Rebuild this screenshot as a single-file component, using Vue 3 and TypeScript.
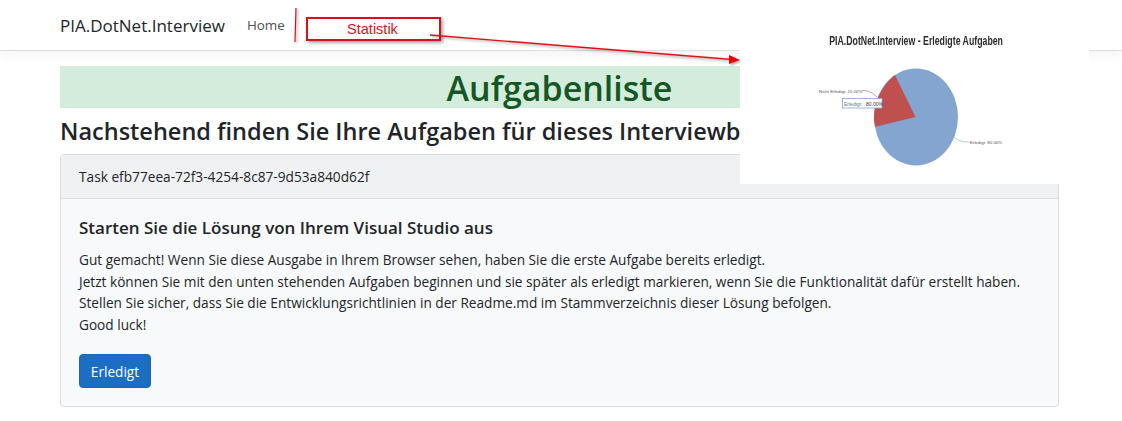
<template>
  <div class="page">
    <header class="navbar">
      <a class="brand">PIA.DotNet.Interview</a>
      <a class="nav-link">Home</a>
    </header>

    <main class="content">
      <div class="banner">Aufgabenliste</div>
      <h2 class="intro">Nachstehend finden Sie Ihre Aufgaben für dieses Interviewbeispiel</h2>

      <section class="card">
        <div class="card-header">Task {{ taskId }}</div>
        <div class="card-body">
          <h5 class="card-title">Starten Sie die Lösung von Ihrem Visual Studio aus</h5>
          <p class="card-text">
            <template v-for="line in lines" :key="line">{{ line }}<br /></template>
          </p>
          <button class="btn" type="button">Erledigt</button>
        </div>
      </section>
    </main>

    <!-- annotation drawn over the screenshot -->
    <svg class="arrows" width="1122" height="100" viewBox="0 0 1122 100">
      <defs>
        <filter id="soft" x="-20%" y="-20%" width="140%" height="140%">
          <feDropShadow dx="1.5" dy="1.5" stdDeviation="1.2" flood-color="#000" flood-opacity="0.35" />
        </filter>
      </defs>
      <g filter="url(#soft)">
        <line x1="296" y1="8" x2="295" y2="42" stroke="#d8101c" stroke-width="1.2" />
        <line x1="430" y1="35" x2="732" y2="59.5" stroke="#e01018" stroke-width="1.3" />
        <polygon points="729,55 740,60 729,64" fill="#f00000" />
      </g>
    </svg>
    <div class="callout">Statistik</div>

    <div class="chart">
      <div class="chart-title"><span>PIA.DotNet.Interview - Erledigte Aufgaben</span></div>
      <svg class="chart-svg" width="349" height="134" viewBox="740 50 349 134">
        <ellipse cx="916" cy="117" rx="42" ry="48.5" fill="#84a5d0" />
        <path d="M915.5 117 L895 75 C884 83 874 100 874 118 C874 121 874.5 124 875.3 126.7 Z" fill="#c0504e" />
        <path d="M862 90.5 C868 90 873 93 877 97" fill="none" stroke="#c0504e" stroke-width="0.6" />
        <path d="M954 137 C960 142 964 142 970 142" fill="none" stroke="#84a5d0" stroke-width="0.6" />
        <text x="819" y="92.5" class="lbl">Nicht Erledigt: 20.00%</text>
        <text x="970" y="144" class="lbl">Erledigt: 80.00%</text>
        <rect x="842.5" y="98.5" width="39.5" height="9.5" fill="#fff" stroke="#84a5d0" stroke-width="0.8" />
        <text x="844" y="105.5" class="tip-key">Erledigt:</text>
        <text x="866" y="105.5" class="tip-val">80.00%</text>
      </svg>
    </div>
  </div>
</template>

<script setup lang="ts">
const taskId = "efb77eea-72f3-4254-8c87-9d53a840d62f";

const lines: string[] = [
  "Gut gemacht! Wenn Sie diese Ausgabe in Ihrem Browser sehen, haben Sie die erste Aufgabe bereits erledigt.",
  "Jetzt können Sie mit den unten stehenden Aufgaben beginnen und sie später als erledigt markieren, wenn Sie die Funktionalität dafür erstellt haben.",
  "Stellen Sie sicher, dass Sie die Entwicklungsrichtlinien in der Readme.md im Stammverzeichnis dieser Lösung befolgen.",
  "Good luck!",
];
</script>

<style>
html,
body {
  margin: 0;
  background: #fff;
  overflow: hidden;
}
</style>

<style scoped>
.page {
  position: relative;
  width: 1122px;
  height: 421px;
  overflow: hidden;
  font-family: "Open Sans", "Noto Sans", sans-serif;
  color: #212529;
}

.navbar {
  display: flex;
  align-items: center;
  height: 50px;
  padding: 0 60px;
  border-bottom: 1px solid #dfdfdf;
  box-shadow: 0 4px 12px rgba(0, 0, 0, 0.05);
  box-sizing: content-box;
}

.brand {
  font-size: 17px;
  color: #212529;
  margin-right: 22px;
}

.nav-link {
  font-size: 13.4px;
  color: #4a4f55;
}

.content {
  padding: 15px 63px 0 60px;
}

.banner {
  height: 42px;
  line-height: 45px;
  background: #d4ecdc;
  color: #155724;
  text-align: center;
  font-size: 34px;
  font-weight: 600;
}

.intro {
  margin: 8px 0 8px;
  font-size: 23.5px;
  line-height: 30px;
  font-weight: 600;
  white-space: nowrap;
  overflow: hidden;
}

.card {
  border: 1px solid #dcdddf;
  border-radius: 4px;
  background: #f8f9fa;
  height: 253px;
  box-sizing: border-box;
}

.card-header {
  height: 44px;
  line-height: 43px;
  padding: 0 18px;
  font-size: 13.7px;
  background: #f0f1f3;
  border-bottom: 1px solid #dcdddf;
  box-sizing: border-box;
}

.card-body {
  padding: 17px 18px;
}

.card-title {
  margin: 0 0 9px;
  font-size: 17px;
  line-height: 24px;
  font-weight: 600;
}

.card-text {
  margin: 0 0 19px;
  font-size: 13.65px;
  line-height: 21.5px;
  white-space: nowrap;
}

.btn {
  display: block;
  width: 72px;
  height: 34px;
  padding: 0;
  border: 1px solid #1a66b8;
  border-radius: 4px;
  background: #1b6ec2;
  color: #fff;
  font-family: inherit;
  font-size: 13.65px;
}

.arrows {
  position: absolute;
  left: 0;
  top: 0;
  z-index: 2;
  pointer-events: none;
}

.callout {
  position: absolute;
  left: 306px;
  top: 17px;
  width: 135px;
  height: 24px;
  box-sizing: border-box;
  border: 2px solid #d8101c;
  box-shadow: 2px 2px 3px rgba(0, 0, 0, 0.35);
  background: #fff;
  color: #e01018;
  font-family: "Liberation Sans", sans-serif;
  font-size: 14.5px;
  line-height: 20px;
  text-align: center;
  padding-right: 2px;
  z-index: 1;
}

.chart {
  position: absolute;
  left: 740px;
  top: 26px;
  width: 349px;
  height: 158px;
  background: #fff;
  z-index: 3;
}

.chart-title {
  text-align: center;
  padding-left: 4px;
  height: 24px;
  line-height: 30px;
  font-family: "Liberation Sans", sans-serif;
  font-size: 12.5px;
  font-weight: 700;
  color: #2c2c2c;
  white-space: nowrap;
}

.chart-title span {
  display: inline-block;
  transform: scaleX(0.7);
}

.chart-svg {
  display: block;
}

.lbl {
  font-family: "Liberation Sans", sans-serif;
  font-size: 4.4px;
  fill: #555;
}

.tip-key {
  font-family: "Liberation Sans", sans-serif;
  font-size: 5px;
  fill: #5a78a8;
}

.tip-val {
  font-family: "Liberation Sans", sans-serif;
  font-size: 5px;
  fill: #333;
}
</style>
